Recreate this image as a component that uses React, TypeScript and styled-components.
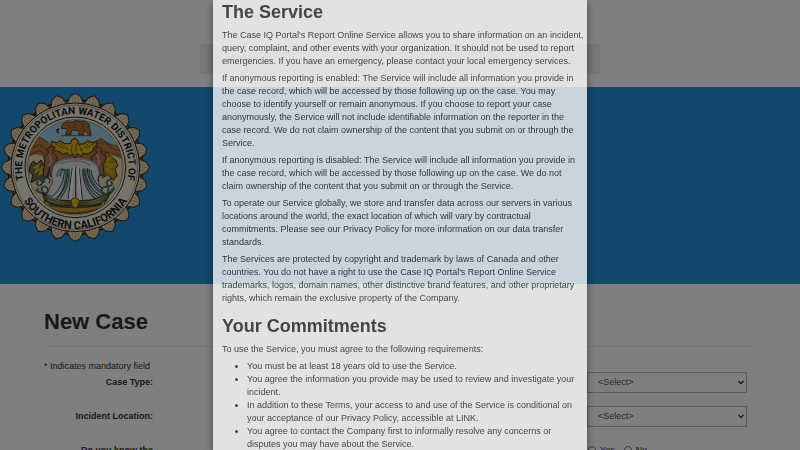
import React from "react";
import styled, { createGlobalStyle } from "styled-components";

const GlobalStyle = createGlobalStyle`
  * { box-sizing: border-box; }
  html, body { height: 100%; }
  body {
    margin: 0;
    overflow: hidden;
    background: #fff;
    color: #333;
    font: 9px/13px "Liberation Sans", Arial, sans-serif;
  }
`;

const Page = styled.div`
  display: flex;
  flex-direction: column;
`;

const NoticeArea = styled.div`
  display: flex;
  justify-content: center;
  padding: 44px 0 13px;
`;

const Notice = styled.div`
  width: 50%;
  height: 30px;
  border-radius: 2px;
  background: #f3ebe0;
`;

const Banner = styled.header`
  padding: 5px 1px 42px;
  background: #2290d6;
`;

const SealDrawing = styled.svg`
  display: block;
  width: 150px;
  height: 150px;
`;

const SealText = styled.text`
  font: bold ${(p: { $size: number }) => p.$size}px Roboto, "Liberation Sans", sans-serif;
  fill: #171717;
`;

const CaseForm = styled.form`
  margin: 24px 44px 0;
`;

const PageTitle = styled.h1`
  margin: 0 0 13px;
  padding-bottom: 10px;
  border-bottom: 1px solid #eaeaea;
  font-size: 22px;
  line-height: 28px;
`;

const Mandatory = styled.p`
  margin: 0;
  line-height: 12px;
`;

const Row = styled.div`
  display: flex;
  align-items: center;
  height: 20px;
  margin-bottom: 14px;
`;

const labelText = `
  width: 109px;
  text-align: right;
  font-weight: bold;
`;

const Label = styled.label`
  ${labelText}
`;

const Question = styled.div`
  ${labelText}
`;

const SelectBox = styled.div`
  position: relative;
  display: flex;
  width: 160px;
  margin: 0 9px 0 auto;
`;

const Select = styled.select`
  appearance: none;
  width: 100%;
  height: 21px;
  padding: 0 10px;
  border: 1px solid #bbb;
  border-radius: 0;
  background: #fff;
  color: #555;
  font: inherit;
`;

const Chevron = styled.svg`
  position: absolute;
  top: 8px;
  right: 3px;
  width: 6px;
  height: 5px;
  pointer-events: none;
`;

const Choices = styled.div`
  display: flex;
  gap: 9px;
  width: 160px;
  padding-left: 1px;
  margin: 0 9px 0 auto;
`;

const Choice = styled.label`
  display: flex;
  align-items: center;
  gap: 4px;
`;

const Radio = styled.input`
  width: 8px;
  height: 8px;
  margin: 0;
`;

const Backdrop = styled.div`
  position: fixed;
  inset: 0;
  display: flex;
  justify-content: center;
  background: rgba(0, 0, 0, 0.5);
`;

const Dialog = styled.section`
  width: 374px;
  padding: 0 0 0 9px;
  opacity: 0.77;
  background: #fff;
  box-shadow: 0 3px 7px rgba(0, 0, 0, 0.6);
`;

const Heading = styled.h2`
  margin: 0 0 5px;
  padding-top: ${(p: { $spaced?: boolean }) => (p.$spaced ? 5 : 0)}px;
  font-size: 18px;
  line-height: 24px;
`;

const Paragraph = styled.p`
  margin: 0 0 4px;
  white-space: pre-line;
`;

const Requirements = styled.ul`
  margin: 0;
  padding-left: 25px;
  white-space: pre-line;
`;

const serviceText = [
  `The Case IQ Portal's Report Online Service allows you to share information on an incident,
query, complaint, and other events with your organization. It should not be used to report
emergencies. If you have an emergency, please contact your local emergency services.`,
  `If anonymous reporting is enabled: The Service will include all information you provide in
the case record, which will be accessed by those following up on the case. You may
choose to identify yourself or remain anonymous. If you choose to report your case
anonymously, the Service will not include identifiable information on the reporter in the
case record. We do not claim ownership of the content that you submit on or through the
Service.`,
  `If anonymous reporting is disabled: The Service will include all information you provide in
the case record, which will be accessed by those following up on the case. We do not
claim ownership of the content that you submit on or through the Service.`,
  `To operate our Service globally, we store and transfer data across our servers in various
locations around the world, the exact location of which will vary by contractual
commitments. Please see our Privacy Policy for more information on our data transfer
standards.`,
  `The Services are protected by copyright and trademark by laws of Canada and other
countries. You do not have a right to use the Case IQ Portal's Report Online Service
trademarks, logos, domain names, other distinctive brand features, and other proprietary
rights, which remain the exclusive property of the Company.`,
];

const requirements = [
  "You must be at least 18 years old to use the Service.",
  `You agree the information you provide may be used to review and investigate your
incident.`,
  `In addition to these Terms, your access to and use of the Service is conditional on
your acceptance of our Privacy Policy, accessible at LINK.`,
  `You agree to contact the Company first to informally resolve any concerns or
disputes you may have about the Service.`,
];

const shells = Array.from({ length: 24 }, (_, i) => i * 15);

function Seal() {
  return (
    <SealDrawing viewBox="3 21 450 450" role="img" aria-label="The Metropolitan Water District of Southern California">
      <defs>
        <path id="upperArc" d="M74 297A160 160 0 1 1 378 297" />
        <path id="lowerArc" d="M67 340A183 183 0 0 0 385 340" />
        <clipPath id="scene"><circle cx="226" cy="247" r="143" /></clipPath>
      </defs>
      <circle cx="226" cy="247" r="202" fill="#9a6931" stroke="#2b2117" strokeWidth="4" />
      {shells.map((angle) => (
        <g key={angle} transform={`rotate(${angle} 226 247)`}>
          <path d="M226 25L241 34L249 52L240 68H212L203 52L211 34Z" fill="#ead3ac" stroke="#382b20" strokeWidth="3" />
          <path d="M226 27V63M217 34V62M235 34V62" stroke="#b69b72" strokeWidth="2" />
        </g>
      ))}
      <circle cx="226" cy="247" r="193" fill="#eee8d9" stroke="#292722" strokeWidth="3" />
      <circle cx="226" cy="247" r="187" fill="none" stroke="#77736a" strokeWidth="2" />
      <circle cx="226" cy="247" r="151" fill="#eee8d9" stroke="#292722" strokeWidth="3" />
      <g clipPath="url(#scene)">
        <rect x="80" y="100" width="292" height="292" fill="#ead6ad" />
        <path d="M80 100H372V207H80Z" fill="#9ccbe4" />
        <path d="M76 192L99 164L122 157L150 177L182 199L226 190L269 180L303 160L326 176L354 184L376 217V245H76Z" fill="#b87939" stroke="#563719" strokeWidth="2" />
        <path d="M88 195L118 178L143 197M281 181L313 170L341 194L372 197M291 198L326 203L365 215M83 211L119 197L150 215" fill="none" stroke="#714820" strokeWidth="3" />
        <path d="M80 222C107 198 127 211 147 228L163 344L77 320ZM290 227L326 203L374 227V316L298 344Z" fill="#e8d2a4" />
        <path d="M92 239L100 228L111 237L123 225L131 238L145 232L151 255L142 283L128 294L111 283L94 293L98 269L86 260Z" fill="#6b7040" stroke="#332e1c" strokeWidth="3" />
        <path d="M307 214L322 202L337 216L347 225L354 242L345 252L352 273L338 284L322 269L307 280L301 254Z" fill="#b28c16" stroke="#42351b" strokeWidth="3" />
        <path d="M102 249L115 240L108 260L126 249L119 268L139 257M310 228L329 220L318 239L344 239L321 253L337 264" fill="none" stroke="#d3ad27" strokeWidth="6" />
        <path d="M142 193L151 183L160 193L158 203L172 215L169 230L162 235L166 274H151L148 246L142 274H129L134 234L132 215L146 203Z" fill="#a67054" stroke="#4a3028" strokeWidth="3" />
        <path d="M286 193L295 183L306 194L303 204L318 215L315 231L308 236L313 271H298L294 246L287 273H275L281 235L273 218L290 204Z" fill="#a67054" stroke="#4a3028" strokeWidth="3" />
        <path d="M147 208L155 231L145 244M291 207L298 231L291 247" fill="none" stroke="#dfb38e" strokeWidth="4" />
        <path d="M158 291C145 227 181 218 225 218C270 218 310 230 295 292L320 342L293 363H158L134 341Z" fill="#dce1df" stroke="#67706e" strokeWidth="3" />
        <path d="M166 240C179 224 210 218 226 223C251 220 274 224 285 242M180 237C190 231 205 228 226 228C249 228 264 234 272 242" fill="none" stroke="#a9a9a3" strokeWidth="5" />
        <path d="M164 346C191 324 199 286 198 255C189 250 181 259 180 274M180 341C201 316 209 286 207 253M248 253C248 290 262 324 295 348M257 252C255 285 271 318 310 336M267 252C267 281 283 311 319 326" fill="none" stroke="#507f81" strokeWidth="5" />
        <path d="M157 334C183 313 193 281 193 256C184 245 171 257 171 275M171 340C194 316 205 283 203 251M252 249C252 285 265 318 300 342M262 249C261 280 278 312 314 331M273 256C276 284 292 307 321 316M217 249L204 342M227 245V347M237 249L247 343" fill="none" stroke="#30383a" strokeWidth="3" />
        <path d="M222 246L210 343M233 247L241 343" fill="none" stroke="#fff" strokeWidth="7" />
        <path d="M107 286C124 278 133 294 120 301C109 303 107 290 116 290M107 314C129 334 154 324 140 307C127 298 119 316 130 318M131 285C143 269 156 286 146 294M344 286C326 277 312 293 325 303C338 303 340 291 331 290M344 309C327 339 298 324 307 310C321 298 332 312 321 319M311 274C299 265 291 279 296 291" fill="#dce4df" stroke="#456065" strokeWidth="5" />
        <path d="M110 307C125 327 143 333 161 332M343 302C330 327 308 333 293 332" fill="none" stroke="#5d999c" strokeWidth="4" />
        <path d="M127 321C151 348 191 348 224 346C263 349 302 343 331 320L319 347C292 367 250 365 225 360C198 366 160 364 134 346Z" fill="#68713e" stroke="#343b23" strokeWidth="4" />
        <path d="M141 335L193 354M145 346L180 357M315 335L263 354M306 347L274 356" stroke="#b4b27c" strokeWidth="3" />
        <path d="M132 348L148 350L147 360C187 371 266 371 303 359V350L317 346L310 366L296 372C257 390 191 389 155 374L137 366Z" fill="#c79835" stroke="#4c371b" strokeWidth="3" />
        <path d="M154 363L295 363M156 372C191 387 258 387 291 371" fill="none" stroke="#594120" strokeWidth="4" strokeDasharray="5 4" />
        <path d="M213 344L226 338L238 346L234 363L226 370L216 362Z" fill="#e7b719" stroke="#66511c" strokeWidth="3" />
      </g>
      <circle cx="226" cy="247" r="143" fill="none" stroke="#77736a" strokeWidth="2" />
      <path d="M155 169L169 174L181 168L193 176L211 175L216 164L226 160L235 169L233 177L250 177L264 168L277 173L291 168L288 185L281 186L278 199L263 207L249 205L243 214L233 207L225 218L218 206L208 213L202 204L187 207L178 199L164 198L164 187L155 181Z" fill="#e0b51a" stroke="#5e4b18" strokeWidth="4" />
      <path d="M166 177L193 190M180 175L207 195M284 175L258 190M268 174L243 195M217 177L213 203M228 174V209M238 180L245 201" stroke="#7b6417" strokeWidth="3" />
      <path d="M184 125L191 115L204 110L216 113L226 106L241 110L254 109L266 116L269 132L273 149L265 149L258 139L253 136L250 149H235L238 137L216 135L212 149H197L202 136L196 130L185 131Z" fill="#ad6d37" stroke="#563621" strokeWidth="3" />
      <path d="M183 152H275M228 112L220 132M250 115L247 132M205 118L209 130" stroke="#765030" strokeWidth="3" />
      <path d="M169 133L178 128L175 141L180 146L170 143Z" fill="#39352b" />
      <SealText $size={30}>
        <textPath href="#upperArc" startOffset="50%" textAnchor="middle">THE METROPOLITAN WATER DISTRICT OF</textPath>
      </SealText>
      <SealText $size={33}>
        <textPath href="#lowerArc" startOffset="50%" textAnchor="middle">SOUTHERN CALIFORNIA</textPath>
      </SealText>
    </SealDrawing>
  );
}

function SelectRow({ id, label }: { id: string; label: string }) {
  return (
    <Row>
      <Label htmlFor={id}>{label}</Label>
      <SelectBox>
        <Select id={id}><option>&lt;Select&gt;</option></Select>
        <Chevron viewBox="0 0 6 5" aria-hidden="true">
          <path d="M0.5 1L3 3.5L5.5 1" fill="none" stroke="#333" strokeWidth="1.4" />
        </Chevron>
      </SelectBox>
    </Row>
  );
}

export default function App() {
  return (
    <>
      <GlobalStyle />
      <Page>
        <NoticeArea><Notice /></NoticeArea>
        <Banner><Seal /></Banner>
        <CaseForm>
          <PageTitle>New Case</PageTitle>
          <Mandatory>* Indicates mandatory field</Mandatory>
          <SelectRow id="case-type" label="Case Type:" />
          <SelectRow id="incident-location" label="Incident Location:" />
          <Row role="radiogroup" aria-labelledby="known">
            <Question id="known">Do you know the</Question>
            <Choices>
              <Choice><Radio type="radio" name="known" />Yes</Choice>
              <Choice><Radio type="radio" name="known" />No</Choice>
            </Choices>
          </Row>
        </CaseForm>
      </Page>
      <Backdrop>
        <Dialog role="dialog" aria-modal="true" aria-labelledby="service-title">
          <Heading id="service-title">The Service</Heading>
          {serviceText.map((text) => <Paragraph key={text}>{text}</Paragraph>)}
          <Heading $spaced>Your Commitments</Heading>
          <Paragraph>To use the Service, you must agree to the following requirements:</Paragraph>
          <Requirements>
            {requirements.map((text) => <li key={text}>{text}</li>)}
          </Requirements>
        </Dialog>
      </Backdrop>
    </>
  );
}
